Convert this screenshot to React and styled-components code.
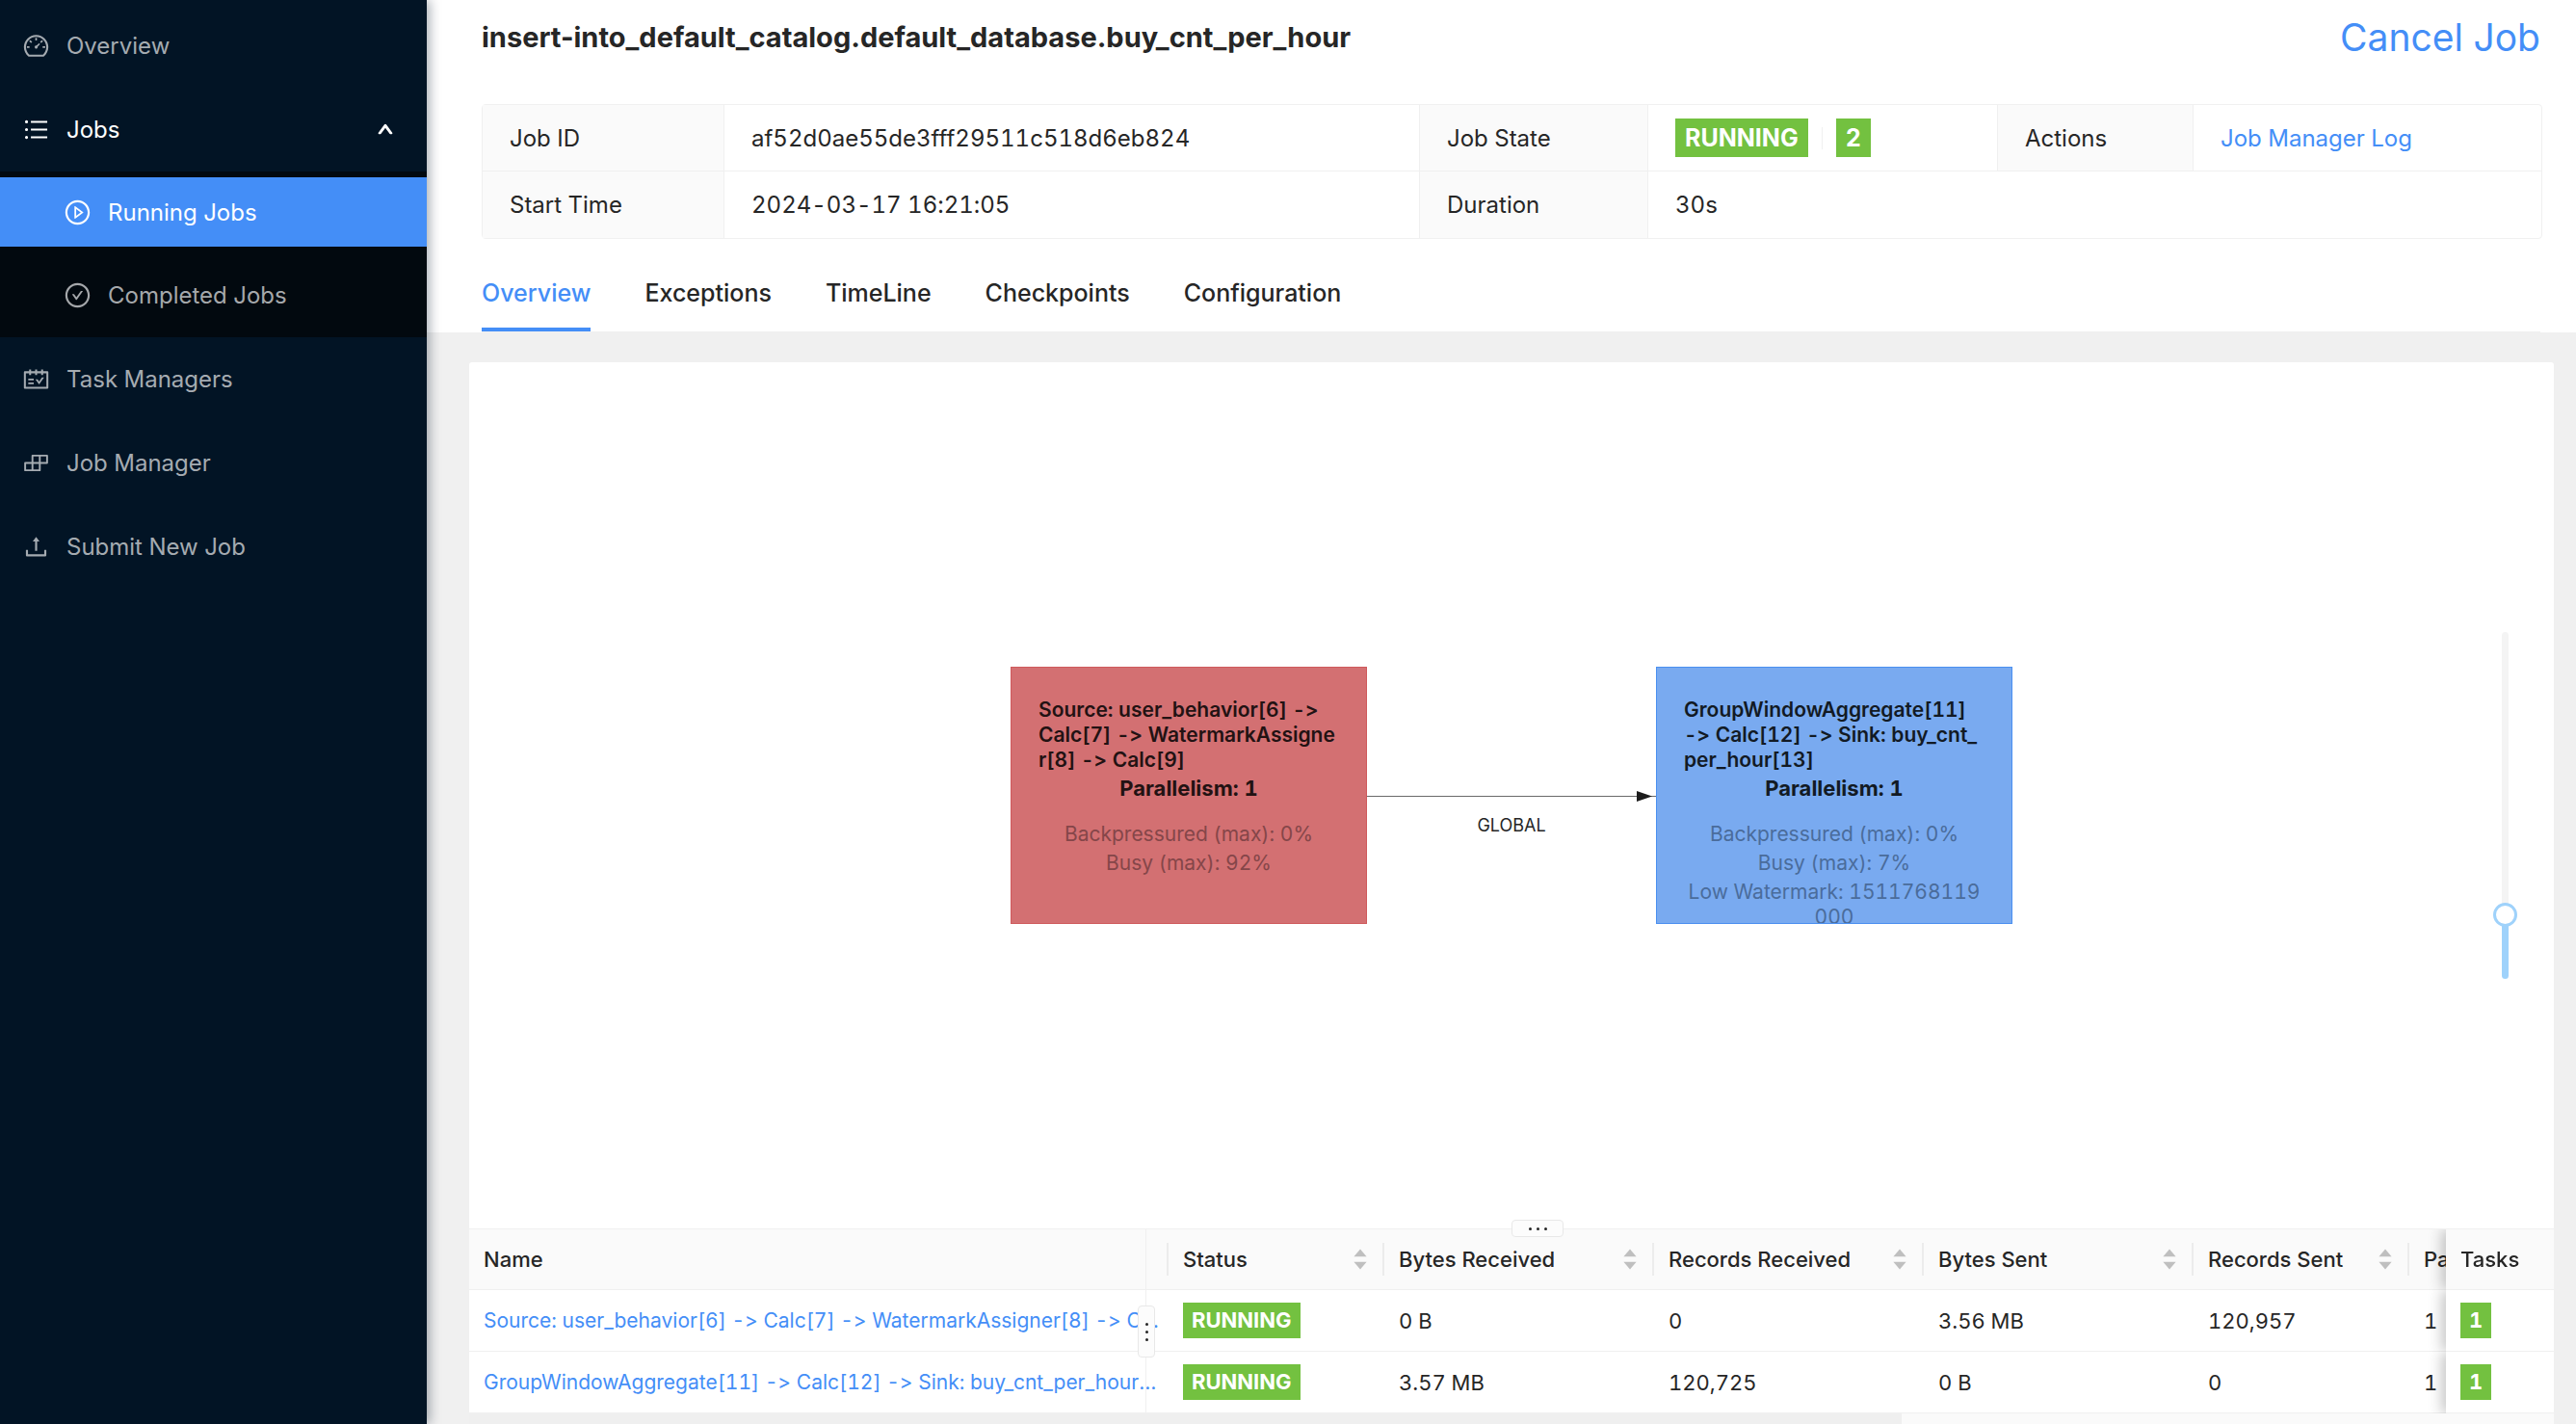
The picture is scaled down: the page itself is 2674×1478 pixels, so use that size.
import React, { useState } from "react";
import styled, { createGlobalStyle, css } from "styled-components";
import {
  AiOutlineDashboard,
  AiOutlineUnorderedList,
  AiOutlinePlayCircle,
  AiOutlineCheckCircle,
  AiOutlineSchedule,
  AiOutlineBuild,
  AiOutlineUpload,
  AiOutlineUp,
} from "react-icons/ai";

const color = {
  text: "#262626",
  primary: "#448ef7",
  green: "#73c140",
  line: "#f0f0f0",
  head: "#fafafa",
  page: "#f0f0f0",
};

const GlobalStyle = createGlobalStyle`
  *, *::before, *::after { box-sizing: border-box; }
  body {
    margin: 0;
    font-family: Inter, "Liberation Sans", sans-serif;
    font-size: 24px;
    font-feature-settings: "calt" 0, "tnum" 1;
    color: ${color.text};
    background: ${color.page};
  }
  button { font-feature-settings: inherit; }
  a { color: inherit; text-decoration: none; }
`;

const Layout = styled.div`
  display: flex;
  height: 100vh;
  overflow: hidden;
`;

/* ---------- Sidebar ---------- */

const Sidebar = styled.nav`
  flex: 0 0 443px;
  padding-top: 4px;
  background: #021425;
  box-shadow: 3px 0 11px rgba(0, 21, 41, 0.35);
  z-index: 2;
`;

const MenuList = styled.ul`
  list-style: none;
  margin: 0;
  padding: 0;
`;

const SubMenu = styled(MenuList)`
  display: flex;
  flex-direction: column;
  gap: 14px;
  padding: 6px 0 8px;
  background: #02090f;
`;

const menuItem = css`
  display: flex;
  align-items: center;
  gap: 17px;
  width: 100%;
  height: 72px;
  padding: 0 34px 0 23px;
  border: 0;
  background: none;
  font: inherit;
  color: #a5abb1;
  cursor: pointer;

  svg { flex: none; width: 29px; height: 29px; }
`;

const MenuEntry = styled.li`
  padding: 7px 0 8px;
`;

const MenuLink = styled.a`
  ${menuItem}
`;

const MenuToggle = styled.button`
  ${menuItem}
  color: #fff;
`;

const Caret = styled(AiOutlineUp)`
  && { width: 18px; height: 18px; margin-left: auto; stroke: #fff; stroke-width: 80; }
`;

const SubLink = styled.a`
  ${menuItem}
  padding-left: 66px;
  color: ${(p) => (p.$active ? "#fff" : "#a5a8ab")};
  background: ${(p) => (p.$active ? color.primary : "transparent")};
`;

/* ---------- Header ---------- */

const Main = styled.main`
  flex: 1;
  min-width: 0;
  display: flex;
  flex-direction: column;
`;

const Header = styled.header`
  padding: 0 37px 0 57px;
  background: #fff;
`;

const TitleRow = styled.div`
  display: flex;
  align-items: center;
  justify-content: space-between;
  height: 76px;
  margin-bottom: 32px;
`;

const Title = styled.h1`
  margin: 0;
  font-size: 29px;
  font-weight: 700;
  font-feature-settings: "calt" 0;
`;

const CancelLink = styled.a`
  font-size: 39px;
  color: ${color.primary};
`;

const Descriptions = styled.table`
  width: 100%;
  table-layout: fixed;
  border-spacing: 0;
  border: 1px solid ${color.line};
  border-radius: 4px;

  th, td {
    height: 69px;
    padding: 0 28px;
    text-align: left;
    font-weight: 400;
    border-right: 1px solid ${color.line};
    border-bottom: 1px solid ${color.line};
  }
  th { background: ${color.head}; }
  tr > :last-child { border-right: 0; }
  tr:last-child > * { border-bottom: 0; }
`;

const StateCell = styled.div`
  display: flex;
  align-items: center;
`;

const Divider = styled.span`
  width: 1px;
  height: 23px;
  margin: 0 14px;
  background: ${color.line};
`;

const Tag = styled.span`
  display: inline-block;
  padding: 0 ${(p) => (p.$small ? 9 : 10)}px;
  font-size: ${(p) => (p.$small ? 22 : 25)}px;
  line-height: ${(p) => (p.$small ? 37 : 40)}px;
  font-weight: 700;
  color: #fff;
  background: ${color.green};
`;

const TextLink = styled.a`
  color: ${color.primary};
`;

const Tabs = styled.div`
  display: flex;
  gap: 56px;
  margin-top: 13px;
  border-bottom: 1px solid ${color.line};
`;

const Tab = styled.button`
  height: 83px;
  padding: 6px 0 0;
  border: 0;
  border-bottom: 4px solid ${(p) => (p.$active ? color.primary : "transparent")};
  background: none;
  font: inherit;
  font-size: 25px;
  font-weight: 500;
  color: ${(p) => (p.$active ? color.primary : color.text)};
  cursor: pointer;
`;

/* ---------- Job graph ---------- */

const Card = styled.section`
  flex: 1;
  min-height: 0;
  display: flex;
  flex-direction: column;
  margin: 31px 23px 0 44px;
  background: #fff;
  border-radius: 3px 3px 0 0;
`;

const Canvas = styled.div`
  position: relative;
  flex: 1;
  display: flex;
  align-items: center;
  justify-content: center;
`;

const nodeTone = {
  red: { fill: "#d37072", edge: "#cf5a5c", text: "#221213", meta: "#854649" },
  blue: { fill: "#79aaf0", edge: "#4a8ff0", text: "#121a24", meta: "#4a6c9b" },
};

const Node = styled.article`
  width: 370px;
  height: 267px;
  padding: 31px 28px 0;
  overflow: hidden;
  font-size: 21px;
  line-height: 26px;
  white-space: pre;
  text-align: center;
  color: ${(p) => nodeTone[p.$tone].text};
  background: ${(p) => nodeTone[p.$tone].fill};
  border: 1px solid ${(p) => nodeTone[p.$tone].edge};
`;

const NodeTitle = styled.h2`
  margin: 0 0 3px;
  font: inherit;
  font-weight: 600;
  text-align: left;
`;

const NodeParallelism = styled.div`
  margin-bottom: 22px;
  font-size: 22px;
  font-weight: 700;
`;

const NodeMeta = styled.div`
  margin-top: 4px;
  color: ${(p) => nodeTone[p.$tone].meta};
`;

const Edge = styled.div`
  display: grid;
  grid-template-rows: 1fr 12px 1fr;
  width: 300px;
  height: 267px;
`;

const EdgeLine = styled.svg`
  grid-row: 2;
  width: 300px;
  height: 12px;
`;

const EdgeLabel = styled.span`
  grid-row: 3;
  padding-top: 13px;
  font-size: 18px;
  line-height: 24px;
  text-align: center;
`;

const ZoomSlider = styled.input`
  position: absolute;
  top: 280px;
  right: 38px;
  width: 25px;
  height: 360px;
  margin: 0;
  appearance: none;
  writing-mode: vertical-lr;
  direction: rtl;
  background: transparent;

  &::-webkit-slider-runnable-track {
    width: 7px;
    border-radius: 4px;
    background: linear-gradient(to top, #9fd2fb 18%, #f4f4f4 18%);
  }
  &::-webkit-slider-thumb {
    appearance: none;
    width: 25px;
    height: 25px;
    margin-left: -9px;
    margin-right: -9px;
    border: 3px solid #9fd2fb;
    border-radius: 50%;
    background: #fff;
  }
`;

/* ---------- Vertices table ---------- */

const TablePanel = styled.div`
  position: relative;
  flex: none;
  border-top: 1px solid ${color.line};
`;

const TableViewport = styled.div`
  overflow: hidden;
`;

const VertexTable = styled.table`
  table-layout: fixed;
  width: 2400px;
  border-spacing: 0;
  font-size: 22px;

  th, td {
    padding: 0 8px 0 15px;
    text-align: left;
    white-space: nowrap;
    border-bottom: 1px solid ${color.line};
  }
  th { height: 63px; font-weight: 500; background: ${color.head}; padding-right: 0; }
  td { height: 64px; background: #fff; }

  tr > :last-child {
    position: sticky;
    right: 0;
    box-shadow: -4px 0 14px rgba(0, 0, 0, 0.24);
    clip-path: inset(0 0 0 -22px);
  }
`;

const HeadCell = styled.div`
  display: flex;
  align-items: center;
  justify-content: space-between;
  height: 34px;
  padding-right: 16px;
  border-right: 2px solid ${(p) => (p.$plain ? "transparent" : "#ececec")};
`;

const Ellipsis = styled(TextLink)`
  display: block;
  overflow: hidden;
  text-overflow: ellipsis;
  font-size: 21px;
`;

const Scrollbar = styled.div`
  height: 11px;
  background: ${color.head};
`;

const ScrollThumb = styled.div`
  width: 68.7%;
  height: 11px;
  background: #efefef;
`;

const ColumnGuide = styled.span`
  position: absolute;
  top: 0;
  bottom: 11px;
  left: 702px;
  width: 1px;
  background: ${color.line};
`;

const Handle = styled.button`
  position: absolute;
  display: flex;
  flex-direction: ${(p) => (p.$vertical ? "column" : "row")};
  align-items: center;
  justify-content: center;
  gap: 5px;
  padding: 0;
  width: ${(p) => (p.$vertical ? 18 : 54)}px;
  height: ${(p) => (p.$vertical ? 54 : 18)}px;
  top: ${(p) => (p.$vertical ? "79px" : "-10px")};
  left: ${(p) => (p.$vertical ? "694px" : "50%")};
  border: 1px solid #e8e8e8;
  border-radius: 4px;
  background: #fcfcfc;
`;

const Dot = styled.i`
  width: 3px;
  height: 3px;
  border-radius: 50%;
  background: ${color.text};
`;

const SortIcon = () => (
  <svg width="14" height="22" viewBox="0 0 14 22" fill="#bfbfbf" aria-hidden="true">
    <path d="M7 0.5 L13.6 8.3 H0.4 Z" />
    <path d="M7 21.5 L13.6 13.7 H0.4 Z" />
  </svg>
);

const DragHandle = ({ vertical, label }) => (
  <Handle type="button" $vertical={vertical} aria-label={label}>
    <Dot />
    <Dot />
    <Dot />
  </Handle>
);

const GraphNode = ({ tone, title, parallelism, meta }) => (
  <Node $tone={tone}>
    <NodeTitle>{title}</NodeTitle>
    <NodeParallelism>Parallelism: {parallelism}</NodeParallelism>
    {meta.map((m) => (
      <NodeMeta key={m} $tone={tone}>{m}</NodeMeta>
    ))}
  </Node>
);

const lowerMenu = [
  { label: "Task Managers", Icon: AiOutlineSchedule },
  { label: "Job Manager", Icon: AiOutlineBuild },
  { label: "Submit New Job", Icon: AiOutlineUpload },
];

const tabs = ["Overview", "Exceptions", "TimeLine", "Checkpoints", "Configuration"];

const columns = [
  { label: "Name", width: 726 },
  { label: "Status", width: 224, sort: true },
  { label: "Bytes Received", width: 280, sort: true },
  { label: "Records Received", width: 280, sort: true },
  { label: "Bytes Sent", width: 280, sort: true },
  { label: "Records Sent", width: 224, sort: true },
  { label: "Parallelism", width: 274, sort: true },
];

const vertices = [
  ["Source: user_behavior[6] -> Calc[7] -> WatermarkAssigner[8] -> Calc[9]", "0 B", "0", "3.56 MB", "120,957", "1", "1"],
  ["GroupWindowAggregate[11] -> Calc[12] -> Sink: buy_cnt_per_hour[13]", "3.57 MB", "120,725", "0 B", "0", "1", "1"],
];

export default function App() {
  const [tab, setTab] = useState("Overview");
  return (
    <>
      <GlobalStyle />
      <Layout>
        <Sidebar>
          <MenuList>
            <MenuEntry>
              <MenuLink href="#overview"><AiOutlineDashboard />Overview</MenuLink>
            </MenuEntry>
            <li>
              <MenuEntry as="div">
                <MenuToggle type="button" aria-expanded="true">
                  <AiOutlineUnorderedList />Jobs<Caret />
                </MenuToggle>
              </MenuEntry>
              <SubMenu>
                <li><SubLink href="#running" $active><AiOutlinePlayCircle />Running Jobs</SubLink></li>
                <li><SubLink href="#completed"><AiOutlineCheckCircle />Completed Jobs</SubLink></li>
              </SubMenu>
            </li>
            {lowerMenu.map(({ label, Icon }) => (
              <MenuEntry key={label}>
                <MenuLink href="#menu"><Icon />{label}</MenuLink>
              </MenuEntry>
            ))}
          </MenuList>
        </Sidebar>
        <Main>
          <Header>
            <TitleRow>
              <Title>insert-into_default_catalog.default_database.buy_cnt_per_hour</Title>
              <CancelLink href="#cancel">Cancel Job</CancelLink>
            </TitleRow>
            <Descriptions>
              <colgroup>
                {[251, 722, 237, 363, 203, 361].map((w, i) => <col key={i} width={w} />)}
              </colgroup>
              <tbody>
                <tr>
                  <th scope="row">Job ID</th>
                  <td>af52d0ae55de3fff29511c518d6eb824</td>
                  <th scope="row">Job State</th>
                  <td>
                    <StateCell><Tag>RUNNING</Tag><Divider /><Tag>2</Tag></StateCell>
                  </td>
                  <th scope="row">Actions</th>
                  <td><TextLink href="#log">Job Manager Log</TextLink></td>
                </tr>
                <tr>
                  <th scope="row">Start Time</th>
                  <td>2024-03-17 16:21:05</td>
                  <th scope="row">Duration</th>
                  <td colSpan={3}>30s</td>
                </tr>
              </tbody>
            </Descriptions>
            <Tabs role="tablist">
              {tabs.map((t) => (
                <Tab key={t} role="tab" aria-selected={t === tab} $active={t === tab} onClick={() => setTab(t)}>
                  {t}
                </Tab>
              ))}
            </Tabs>
          </Header>
          <Card>
            <Canvas>
              <GraphNode
                tone="red"
                title={"Source: user_behavior[6] ->\nCalc[7] -> WatermarkAssigne\nr[8] -> Calc[9]"}
                parallelism={1}
                meta={["Backpressured (max): 0%", "Busy (max): 92%"]}
              />
              <Edge>
                <EdgeLine viewBox="0 0 300 12" aria-hidden="true">
                  <path d="M0 6.5 H300" stroke="#6a6a6a" strokeWidth="1" />
                  <path d="M280 1 L296 6.5 L280 12 Z" fill="#1c1c1c" />
                </EdgeLine>
                <EdgeLabel>GLOBAL</EdgeLabel>
              </Edge>
              <GraphNode
                tone="blue"
                title={"GroupWindowAggregate[11]\n-> Calc[12] -> Sink: buy_cnt_\nper_hour[13]"}
                parallelism={1}
                meta={["Backpressured (max): 0%", "Busy (max): 7%", "Low Watermark: 1511768119\n000"]}
              />
              <ZoomSlider type="range" min="0" max="100" defaultValue="16" aria-label="Zoom" />
            </Canvas>
            <TablePanel>
              <TableViewport>
                <VertexTable>
                  <colgroup>
                    {columns.map((c) => <col key={c.label} width={c.width} />)}
                    <col width={112} />
                  </colgroup>
                  <thead>
                    <tr>
                      {columns.map((c) => (
                        <th key={c.label} scope="col">
                          <HeadCell>{c.label}{c.sort && <SortIcon />}</HeadCell>
                        </th>
                      ))}
                      <th scope="col"><HeadCell $plain>Tasks</HeadCell></th>
                    </tr>
                  </thead>
                  <tbody>
                    {vertices.map(([name, ...cells]) => (
                      <tr key={name}>
                        <td><Ellipsis href="#vertex">{name}</Ellipsis></td>
                        <td><Tag $small>RUNNING</Tag></td>
                        {cells.slice(0, 5).map((c, i) => <td key={i}>{c}</td>)}
                        <td><Tag $small>{cells[5]}</Tag></td>
                      </tr>
                    ))}
                  </tbody>
                </VertexTable>
              </TableViewport>
              <Scrollbar><ScrollThumb /></Scrollbar>
              <ColumnGuide />
              <DragHandle label="Resize graph" />
              <DragHandle vertical label="Resize name column" />
            </TablePanel>
          </Card>
        </Main>
      </Layout>
    </>
  );
}
